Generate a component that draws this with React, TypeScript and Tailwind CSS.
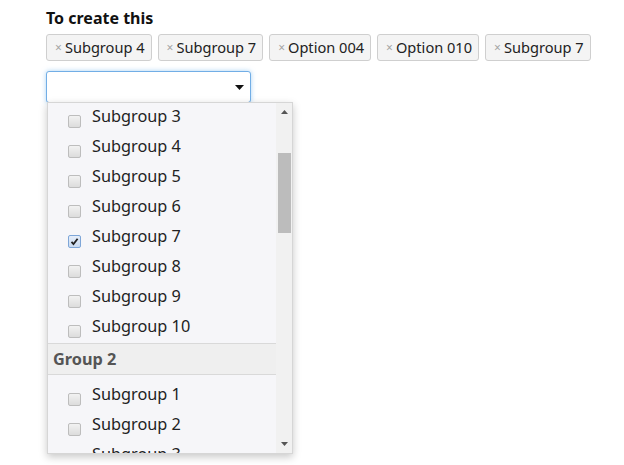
import React from 'react';

const TAGS = ['Subgroup 4', 'Subgroup 7', 'Option 004', 'Option 010', 'Subgroup 7'];

const GROUP1 = [3, 4, 5, 6, 7, 8, 9, 10];
const GROUP2 = [1, 2, 3];

function Checkbox({ checked }: { checked?: boolean }) {
  return (
    <span
      className={`mt-[12px] flex h-[13px] w-[13px] shrink-0 items-center justify-center rounded-[2px] border ${
        checked
          ? 'border-[#7ea6d8] bg-[linear-gradient(#e6eefa,#c9daf0)]'
          : 'border-[#bdbdbd] bg-[linear-gradient(#f2f2f2,#dcdcdc)]'
      }`}
    >
      {checked && (
        <svg width="9" height="9" viewBox="0 0 9 9">
          <path d="M1.5 4.8 L3.5 7 L7.6 1.8" fill="none" stroke="#222" strokeWidth="1.8" />
        </svg>
      )}
    </span>
  );
}

function Option({ label, checked }: { label: string; checked?: boolean }) {
  return (
    <div className="flex h-[30px] shrink-0 items-start gap-[11px] pl-[20px]">
      <Checkbox checked={checked} />
      <span className="text-[16.3px] leading-[26px] text-[#222]">{label}</span>
    </div>
  );
}

export default function App() {
  return (
    <div className="min-h-screen bg-white pl-[46px] pt-[8px]" style={{ fontFamily: '"Noto Sans", "Open Sans", sans-serif' }}>
      <h1 className="text-[16px] font-bold leading-[20px] text-[#111]">To create this</h1>

      {/* Selected tags */}
      <div className="mt-[6px] flex gap-[6px]">
        {TAGS.map((t, i) => (
          <div
            key={i}
            className="flex h-[27px] items-center gap-[3px] rounded-[3px] border border-[#cfcfcf] bg-[#f4f4f4] pl-[8px] pr-[6px]"
          >
            <span className="text-[12px] leading-none text-[#a5a5a5]">×</span>
            <span className="text-[14.6px] leading-none text-[#222]">{t}</span>
          </div>
        ))}
      </div>

      {/* Select with dropdown */}
      <div className="relative mt-[10px] w-[205px]">
        <div className="flex h-[32px] items-center justify-end rounded-[3px] border border-[#72aee6] bg-white pr-[6px] shadow-[0_0_5px_rgba(102,175,233,0.55)]">
          <svg width="9" height="5" viewBox="0 0 9 5">
            <path d="M0 0 H9 L4.5 5 Z" fill="#111" />
          </svg>
        </div>

        <div className="absolute left-[1px] top-[31px] flex h-[352px] w-[246px] overflow-hidden border border-[#d6d6d6] bg-[#f6f6f9] shadow-[0_3px_8px_rgba(0,0,0,0.22)]">
          <div className="flex flex-1 flex-col">
            {GROUP1.map((n) => (
              <Option key={n} label={`Subgroup ${n}`} checked={n === 7} />
            ))}
            <div className="flex h-[32px] shrink-0 items-center border-y border-[#d9d9d9] bg-[#efefef] pl-[5px] text-[16.3px] font-bold text-[#555]">
              Group 2
            </div>
            <div className="h-[6px] shrink-0" />
            {GROUP2.map((n) => (
              <Option key={n} label={`Subgroup ${n}`} />
            ))}
          </div>

          {/* Scrollbar */}
          <div className="flex w-[16px] shrink-0 flex-col items-center bg-[#f1f1f1]">
            <svg className="mt-[7px]" width="7" height="4" viewBox="0 0 7 4">
              <path d="M0 4 H7 L3.5 0 Z" fill="#555" />
            </svg>
            <div className="mt-[39px] h-[80px] w-[13px] bg-[#bcbcbc]" />
            <div className="flex-1" />
            <svg className="mb-[7px]" width="7" height="4" viewBox="0 0 7 4">
              <path d="M0 0 H7 L3.5 4 Z" fill="#555" />
            </svg>
          </div>
        </div>
      </div>
    </div>
  );
}
